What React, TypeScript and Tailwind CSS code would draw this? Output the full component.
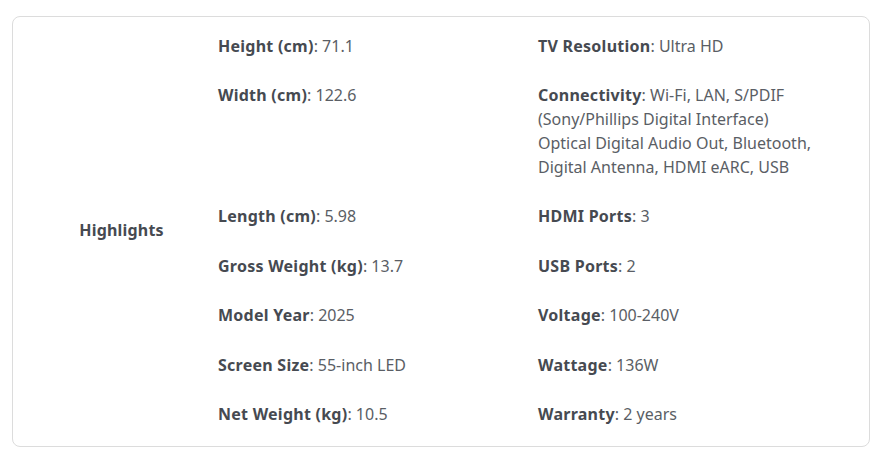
import React from "react";

const left: [string, React.ReactNode][] = [
  ["Height (cm)", "71.1"],
  ["Width (cm)", "122.6"],
  ["Length (cm)", "5.98"],
  ["Gross Weight (kg)", "13.7"],
  ["Model Year", "2025"],
  ["Screen Size", "55-inch LED"],
  ["Net Weight (kg)", "10.5"],
];

const right: [string, React.ReactNode][] = [
  ["TV Resolution", "Ultra HD"],
  [
    "Connectivity",
    <>
      Wi-Fi, LAN, S/PDIF
      <br />
      (Sony/Phillips Digital Interface)
      <br />
      Optical Digital Audio Out, Bluetooth,
      <br />
      Digital Antenna, HDMI eARC, USB
    </>,
  ],
  ["HDMI Ports", "3"],
  ["USB Ports", "2"],
  ["Voltage", "100-240V"],
  ["Wattage", "136W"],
  ["Warranty", "2 years"],
];

function Item({ k, v }: { k: string; v: React.ReactNode }) {
  return (
    <div className="py-[12.7px] pr-4 text-[16px] leading-[24px] text-[#5a5e65]">
      <span className="font-bold tracking-[0.25px] text-[#464a51]">{k}</span>
      <span>: </span>
      {v}
    </div>
  );
}

export default function App() {
  return (
    <div className="min-h-[458px] bg-white px-3 pt-4 font-['Noto_Sans',sans-serif]">
      <div className="flex w-[858px] rounded-lg border border-[#dcdcdc] pt-[4px] pb-[7px]">
        <div className="flex w-[205px] items-center justify-center pl-3 pt-px text-[16px] font-bold tracking-[0.2px] text-[#464a51]">
          Highlights
        </div>
        <div className="grid flex-1 grid-cols-[320px_1fr]">
          {left.map((l, i) => (
            <React.Fragment key={i}>
              <Item k={l[0]} v={l[1]} />
              <Item k={right[i][0]} v={right[i][1]} />
            </React.Fragment>
          ))}
        </div>
      </div>
    </div>
  );
}
